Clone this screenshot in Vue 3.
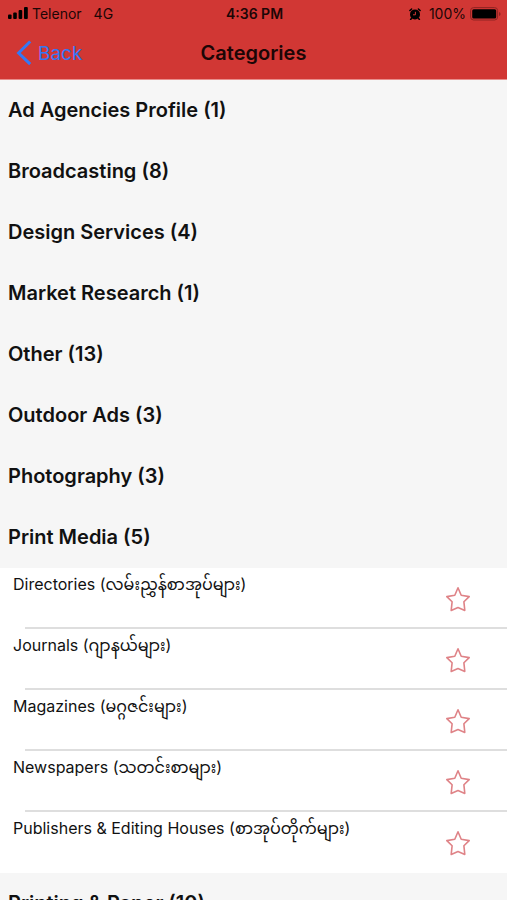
<template>
  <div class="screen">
    <header class="top">
      <div class="status-bar">
        <div class="status-left">
          <svg class="signal" viewBox="0 0 20 13" width="20" height="13">
            <rect x="0" y="7.5" width="3.6" height="4.5" rx="1" />
            <rect x="5.2" y="5.5" width="3.6" height="6.5" rx="1" />
            <rect x="10.6" y="3" width="3.6" height="9" rx="1" />
            <rect x="16" y="0" width="3.8" height="12" rx="1" />
          </svg>
          <span>Telenor</span>
          <span class="network">4G</span>
        </div>
        <span class="time">4:36 PM</span>
        <div class="status-right">
          <svg viewBox="0 0 12 12" width="12" height="12">
            <circle cx="6" cy="6.4" r="5" />
            <path d="M.9 2.5 2.6 1M11.1 2.5 9.4 1M2.6 10.2 1.6 11.4M9.4 10.2l1 1.2" stroke="#000" stroke-width="1.5" stroke-linecap="round" />
            <path d="M6.4 3.8v3H4" fill="none" stroke="#d13734" stroke-width="1" />
          </svg>
          <span class="percent">100%</span>
          <svg viewBox="0 0 31 14" width="31" height="14">
            <rect x=".6" y=".6" width="27" height="12.4" rx="3" fill="none" stroke="#8f2422" stroke-width="1" />
            <rect x="2.2" y="2.2" width="24" height="9.2" rx="1.5" />
            <path d="M29 5v4q1.6-.6 1.6-2T29 5z" fill="#8f2422" />
          </svg>
        </div>
      </div>
      <nav class="nav-bar">
        <button class="back" type="button">
          <svg viewBox="0 0 16 26" width="16" height="26">
            <path d="M14.2 1.5 2.6 13l11.6 11.2" fill="none" stroke="#3478f6" stroke-width="3" />
          </svg>
          <span>Back</span>
        </button>
        <h1>Categories</h1>
      </nav>
    </header>
    <main class="list">
      <section v-for="category in categories" :key="category.name">
        <h2 @click="toggle(category.name)">{{ category.name }} ({{ category.count }})</h2>
        <ul v-if="opened == category.name">
          <li v-for="item in category.items" :key="item">
            <p>{{ item }}</p>
            <button class="star" type="button" :aria-label="item" @click="toggleFavorite(item)">
              <svg viewBox="0 0 26 26" width="26" height="26">
                <path
                  d="M13 1.8 16.2 9.2 24.2 10.6 18.9 15.8 19.8 24.4 13 21.6 6.2 24.4 7.1 15.8 1.8 10.6 9.8 9.2z"
                  :fill="favorites.includes(item) ? '#dc7579' : 'none'"
                  stroke="#df8387"
                  stroke-width="1.6"
                  stroke-linejoin="round"
                />
              </svg>
            </button>
          </li>
        </ul>
      </section>
    </main>
  </div>
</template>

<script setup>
import { ref } from "vue";

const categories = [
  { name: "Ad Agencies Profile", count: 1 },
  { name: "Broadcasting", count: 8 },
  { name: "Design Services", count: 4 },
  { name: "Market Research", count: 1 },
  { name: "Other", count: 13 },
  { name: "Outdoor Ads", count: 3 },
  { name: "Photography", count: 3 },
  {
    name: "Print Media",
    count: 5,
    items: [
      "Directories (လမ်းညွှန်စာအုပ်များ)",
      "Journals (ဂျာနယ်များ)",
      "Magazines (မဂ္ဂဇင်းများ)",
      "Newspapers (သတင်းစာများ)",
      "Publishers & Editing Houses (စာအုပ်တိုက်များ)",
    ],
  },
  { name: "Printing & Paper", count: 10 },
];
const opened = ref("Print Media");
const favorites = ref([]);

const toggle = (name) => {
  opened.value = opened.value == name ? "" : name;
};
const toggleFavorite = (item) => {
  if (favorites.value.includes(item)) {
    favorites.value = favorites.value.filter((i) => i != item);
  } else {
    favorites.value.push(item);
  }
};
</script>

<style>
body {
  margin: 0;
  background-color: #f6f6f6;
}
</style>

<style scoped>
.screen {
  display: flex;
  flex-direction: column;
  height: 100vh;
  font-family: Inter, "Noto Sans Myanmar", "Noto Sans", sans-serif;
  color: #111;
}
.top {
  flex: none;
  background-color: #d13734;
  color: #1c0606;
  border-bottom: 1px solid #e88e8c;
}
.status-bar {
  display: grid;
  grid-template-columns: 1fr auto 1fr;
  align-items: center;
  height: 27px;
  padding: 0 6px 0 8px;
  font-size: 14px;
}
.status-left,
.status-right {
  display: flex;
  align-items: center;
  gap: 4px;
}
.status-right {
  justify-content: flex-end;
}
.network {
  margin-left: 8px;
}
.percent {
  margin-left: 4px;
}
.time {
  font-weight: 600;
}
.nav-bar {
  display: grid;
  grid-template-columns: 1fr auto 1fr;
  align-items: center;
  height: 52px;
  padding: 0 16px;
}
.back {
  display: flex;
  align-items: center;
  gap: 6px;
  justify-self: start;
  padding: 0;
  border: none;
  background: none;
  font-family: inherit;
  font-size: 19px;
  color: #3478f6;
  cursor: pointer;
}
h1 {
  margin: 0;
  font-size: 20px;
  font-weight: 600;
}
.list {
  flex: 1;
  overflow-y: auto;
  scrollbar-width: none;
}
h2 {
  margin: 0;
  padding: 0 8px;
  font-size: 20px;
  font-weight: 600;
  line-height: 61px;
  cursor: pointer;
}
ul {
  margin: 0;
  padding: 0;
  list-style: none;
  background-color: #fff;
}
li {
  display: flex;
  justify-content: space-between;
  height: 61px;
  padding: 0 36px 0 13px;
  box-sizing: border-box;
  background: linear-gradient(#dedede, #dedede) no-repeat 25px 100% / 100% 2px;
}
li:last-child {
  background: none;
}
li p {
  margin: 0;
  font-size: 16px;
  line-height: 32px;
}
.star {
  display: flex;
  align-items: center;
  padding: 0;
  border: none;
  background: none;
  cursor: pointer;
}
</style>
